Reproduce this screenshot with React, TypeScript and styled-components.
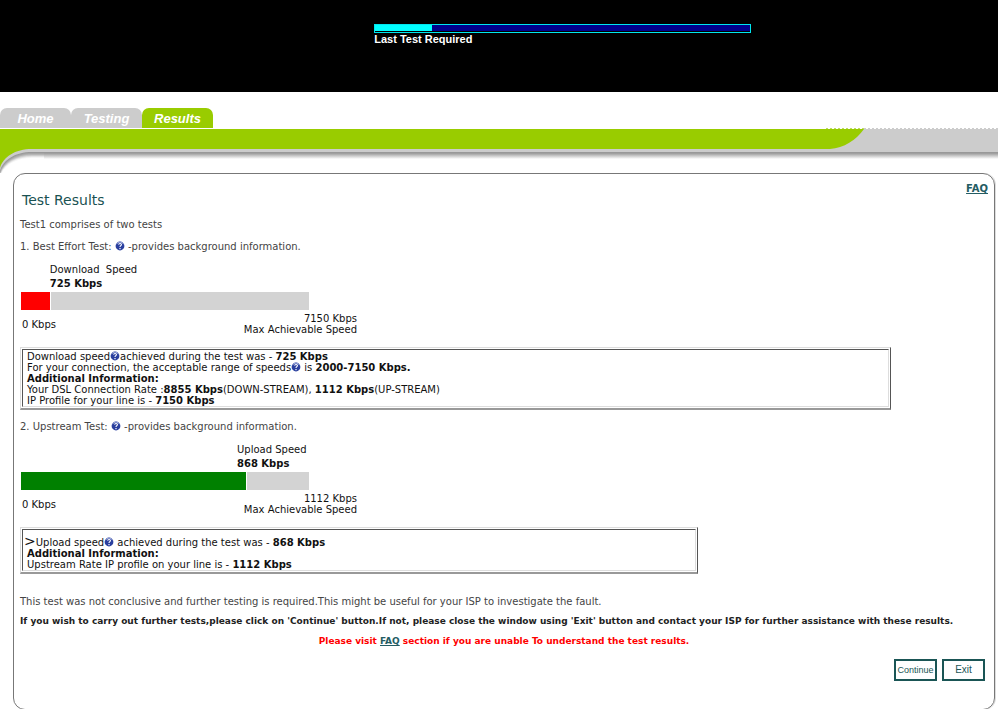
import React from "react";
import styled, { createGlobalStyle } from "styled-components";

const sans = `Verdana, "DejaVu Sans", sans-serif`;
const arial = `"Liberation Sans", Arial, sans-serif`;

const GlobalStyle = createGlobalStyle`
  *, *::before, *::after { box-sizing: border-box; }
  body { margin: 0; background: #fff; font: 10px/11px ${sans}; color: #000; }
  p, h1 { margin: 0; }
`;

const Banner = styled.header`
  background: #000;
  height: 92px;
  padding: 24px 0 0 37.5%;
`;
const Progress = styled.div`
  width: 377px;
  max-width: 95%;
  height: 9px;
  border: 1px solid #00e5ee;
  background: #000;
  padding-bottom: 1px;
`;
const ProgressTrack = styled.div`
  height: 100%;
  background: #00008b;
`;
const ProgressFill = styled.div`
  height: 100%;
  width: 15%;
  background: #0ff;
`;
const ProgressLabel = styled.p`
  font: bold 11px/13px ${arial};
  color: #fff;
`;

const Tabs = styled.nav`
  display: flex;
  margin-top: 16px;
`;
const Tab = styled.a<{ $active?: boolean }>`
  min-width: 71px;
  padding: 0 12px;
  height: 20px;
  border-radius: 7px 7px 0 0;
  background: ${(p) => (p.$active ? "#9c0" : "#ccc")};
  color: #fff;
  font: italic bold 13px/21px ${arial};
  text-align: center;
  text-decoration: none;
`;

const Band = styled.div`
  display: flex;
  height: 45px;
  svg { display: block; flex: none; }
`;
const shadow = `#ccc 21px 24px, #999 24px 25px, #a8a8a8 26px, #ccc 28px, #eee 30px, #fff 31px`;
const BandGreen = styled.div`
  flex: 1;
  background: linear-gradient(#fff 0 1px, #9c0 1px 21px, ${shadow});
`;
const BandGrey = styled.div`
  width: 172px;
  display: flex;
  background: linear-gradient(#fff 0 1px, #ccc 1px 21px, ${shadow});
`;
const Dots = styled.div`
  flex: 1;
  height: 1px;
  background: repeating-linear-gradient(90deg, #ccc 0 2px, #fff 2px 4px);
`;

const curveLayers: [number, string][] = [
  [9, "#f6f6f6"],
  [8, "#e4e4e4"],
  [7, "#ccc"],
  [6, "#b5b5b5"],
  [5, "#a5a5a5"],
  [4, "#999"],
  [3, "#ccc"],
  [0, "#9c0"],
];

const Panel = styled.main`
  margin: 0 3px 0 13px;
  border: 1px solid #777;
  border-radius: 12px;
  padding: 9px 6px 28px;
  box-shadow: 1px 0 0 #ddd;
`;
const PanelHead = styled.div`
  display: flex;
  justify-content: space-between;
  align-items: flex-start;
`;
const Title = styled.h1`
  font: 14px/18px ${sans};
  color: #1a5252;
  padding: 8px 0 0 2px;
`;
const Link = styled.a`
  font-weight: bold;
  color: #245c63;
`;
const Content = styled.div`
  color: #444;
`;
const Note = styled.p<{ $top: number; $strong?: boolean; $alert?: boolean }>`
  margin-top: ${(p) => p.$top}px;
  font-size: ${(p) => (p.$strong ? 9 : 10)}px;
  font-weight: ${(p) => (p.$strong ? "bold" : "normal")};
  color: ${(p) => (p.$alert ? "#f00" : p.$strong ? "#222" : "#444")};
  text-align: ${(p) => (p.$alert ? "center" : "left")};
`;

const Meter = styled.section`
  width: 337px;
  margin-top: 11px;
  color: #111;
`;
const MeterTrackArea = styled.div`
  width: 289px;
  padding-left: 1px;
`;
const MeterLabel = styled.div<{ $start: number }>`
  padding-left: ${(p) => p.$start}%;
  line-height: 14px;
  white-space: pre;
`;
const MeterBar = styled.div`
  display: flex;
  gap: 1px;
  height: 18px;
  margin-top: 1px;
`;
const MeterFill = styled.div<{ $color: string }>`
  background: ${(p) => p.$color};
`;
const MeterRest = styled.div`
  flex: 1;
  background: #d3d3d3;
`;
const MeterScale = styled.div`
  display: flex;
  justify-content: space-between;
  align-items: center;
  padding: 3px 0 0 2px;
  text-align: right;
`;

const InfoOuter = styled.div<{ $width: number }>`
  width: ${(p) => p.$width}%;
  margin-top: 12px;
  border: solid;
  border-width: 1px 1px 2px 1px;
  border-color: #ddd #555 #999 #ddd;
  padding: 1px;
  color: #111;
`;
const InfoInner = styled.div<{ $top: number }>`
  border: 1px solid;
  border-color: #555 #ddd #ddd #555;
  padding: ${(p) => p.$top}px 4px 0;
`;
const Marker = styled.span`
  font-size: 14px;
  line-height: 14px;
  margin-left: -3px;
`;

const Actions = styled.div`
  display: flex;
  justify-content: flex-end;
  gap: 5px;
  margin-top: 12px;
  padding-right: 3px;
`;
const Button = styled.button<{ $size: number }>`
  width: 43px;
  height: 22px;
  padding: 0;
  border: 2px solid #1a5555;
  background: #fff;
  color: #1a5555;
  font: ${(p) => p.$size}px/12px ${arial};
`;

const HelpSvg = styled.svg`
  width: 10px;
  height: 10px;
  vertical-align: -1px;
`;
const Help = () => (
  <HelpSvg viewBox="0 0 10 10" role="img" aria-label="Help">
    <circle cx="5" cy="5" r="4.4" fill="#2a3f9e" />
    <path d="M1.5 3.2A4 4 0 0 1 8.5 3.2" fill="none" stroke="#9aa8dc" strokeWidth="1" />
    <path d="M3.6 3.6C3.8 2 6.6 2.2 6.4 3.7C6.3 4.7 5 4.7 5 6" fill="none" stroke="#fff" strokeWidth="1.1" />
    <rect x="4.4" y="7" width="1.2" height="1.2" fill="#fff" />
  </HelpSvg>
);

type SpeedProps = {
  label: string;
  value: number;
  max: number;
  color: string;
  start: number;
};
const SpeedMeter = ({ label, value, max, color, start }: SpeedProps) => (
  <Meter>
    <MeterTrackArea>
      <MeterLabel $start={start}>{label}</MeterLabel>
      <MeterLabel $start={start}>
        <b>{value} Kbps</b>
      </MeterLabel>
      <MeterBar>
        <MeterFill $color={color} style={{ width: `${(value / max) * 100}%` }} />
        <MeterRest />
      </MeterBar>
    </MeterTrackArea>
    <MeterScale>
      <span>0 Kbps</span>
      <span>
        {max} Kbps
        <br />
        Max Achievable Speed
      </span>
    </MeterScale>
  </Meter>
);

export default function App() {
  return (
    <>
      <GlobalStyle />
      <Banner>
        <Progress>
          <ProgressTrack>
            <ProgressFill />
          </ProgressTrack>
        </Progress>
        <ProgressLabel>Last Test Required</ProgressLabel>
      </Banner>
      <Tabs>
        <Tab href="#home">Home</Tab>
        <Tab href="#testing">Testing</Tab>
        <Tab href="#results" $active>
          Results
        </Tab>
      </Tabs>
      <Band>
        <svg width="44" height="45" viewBox="0 0 44 45" aria-hidden="true">
          {curveLayers.map(([dy, color]) => (
            <path
              key={dy}
              d="M0 1V40C3 29 15 21 32 21H44V1Z"
              transform={`translate(0 ${dy})`}
              fill={color}
            />
          ))}
          <rect width="44" height="1" fill="#fff" />
          <rect y="1" width="44" height="12" fill="#9c0" />
        </svg>
        <BandGreen />
        <BandGrey>
          <svg width="38" height="21" viewBox="0 0 38 21" aria-hidden="true">
            <path d="M0 1H38C30 12 18 20 4 21H0Z" fill="#9c0" />
            <path d="M0 .5H38" stroke="#bbdc60" strokeDasharray="2 2" />
          </svg>
          <Dots />
        </BandGrey>
      </Band>
      <Panel>
        <PanelHead>
          <Title>Test Results</Title>
          <Link href="#faq">FAQ</Link>
        </PanelHead>
        <Content>
          <Note $top={10}>Test1 comprises of two tests</Note>
          <Note $top={11}>
            1. Best Effort Test: <Help /> -provides background information.
          </Note>
          <SpeedMeter label="Download  Speed" value={725} max={7150} color="#f00" start={10} />
          <InfoOuter $width={90}>
            <InfoInner $top={1}>
              Download speed
              <Help />
              achieved during the test was - <b>725 Kbps</b>
              <br />
              For your connection, the acceptable range of speeds
              <Help /> is <b>2000-7150 Kbps.</b>
              <br />
              <b>Additional Information:</b>
              <br />
              Your DSL Connection Rate :<b>8855 Kbps</b>(DOWN-STREAM), <b>1112 Kbps</b>(UP-STREAM)
              <br />
              IP Profile for your line is - <b>7150 Kbps</b>
            </InfoInner>
          </InfoOuter>
          <Note $top={11}>
            2. Upstream Test: <Help /> -provides background information.
          </Note>
          <SpeedMeter label="Upload Speed" value={868} max={1112} color="#008000" start={75} />
          <InfoOuter $width={70}>
            <InfoInner $top={4}>
              <Marker>&gt;</Marker>Upload speed
              <Help /> achieved during the test was - <b>868 Kbps</b>
              <br />
              <b>Additional Information:</b>
              <br />
              Upstream Rate IP profile on your line is - <b>1112 Kbps</b>
            </InfoInner>
          </InfoOuter>
          <Note $top={22}>
            This test was not conclusive and further testing is required.This might be useful for your ISP to
            investigate the fault.
          </Note>
          <Note $top={9} $strong>
            If you wish to carry out further tests,please click on 'Continue' button.If not, please close the
            window using 'Exit' button and contact your ISP for further assistance with these results.
          </Note>
          <Note $top={9} $strong $alert>
            Please visit <Link href="#faq">FAQ</Link> section if you are unable To understand the test results.
          </Note>
        </Content>
        <Actions>
          <Button type="button" $size={9}>
            Continue
          </Button>
          <Button type="button" $size={10}>
            Exit
          </Button>
        </Actions>
      </Panel>
    </>
  );
}
